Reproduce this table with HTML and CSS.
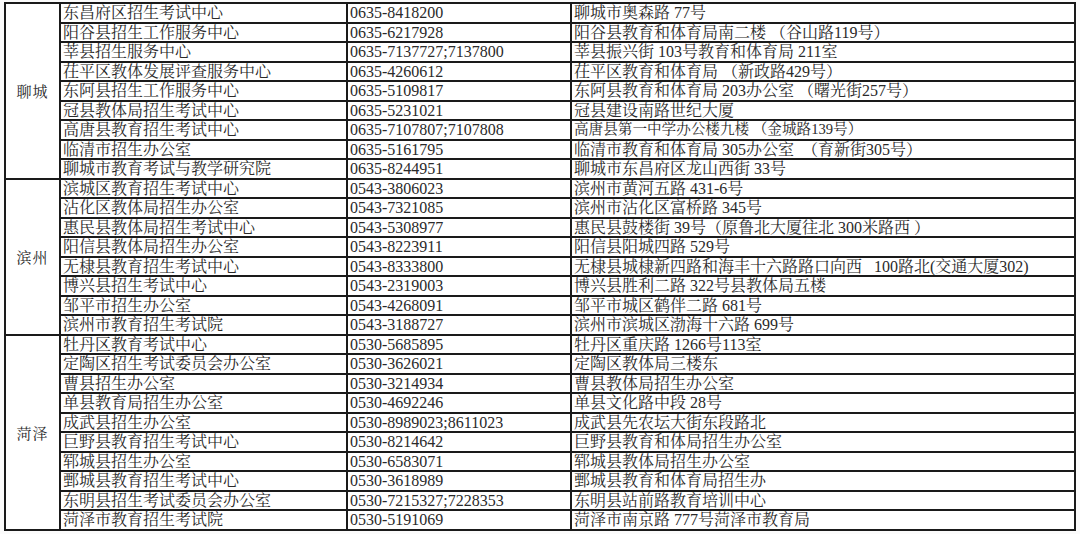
FILE: index.html
```html
<!DOCTYPE html>
<html lang="zh-CN">
<head>
<meta charset="utf-8">
<title>招生考试机构联系方式</title>
<link rel="stylesheet" href="styles.css">
</head>
<body>
<div class="sheet">
  <div class="region r9">聊城</div>
  <div class="cell name">东昌府区招生考试中心</div><div class="cell phone">0635-8418200</div><div class="cell addr">聊城市奥森路 77号</div>
  <div class="cell name">阳谷县招生工作服务中心</div><div class="cell phone">0635-6217928</div><div class="cell addr">阳谷县教育和体育局南二楼 （谷山路119号）</div>
  <div class="cell name">莘县招生服务中心</div><div class="cell phone">0635-7137727;7137800</div><div class="cell addr">莘县振兴街 103号教育和体育局 211室</div>
  <div class="cell name">茌平区教体发展评查服务中心</div><div class="cell phone">0635-4260612</div><div class="cell addr">茌平区教育和体育局 （新政路429号）</div>
  <div class="cell name">东阿县招生工作服务中心</div><div class="cell phone">0635-5109817</div><div class="cell addr">东阿县教育和体育局 203办公室 （曙光街257号）</div>
  <div class="cell name">冠县教体局招生考试中心</div><div class="cell phone">0635-5231021</div><div class="cell addr">冠县建设南路世纪大厦</div>
  <div class="cell name">高唐县教育招生考试中心</div><div class="cell phone">0635-7107807;7107808</div><div class="cell addr small">高唐县第一中学办公楼九楼 （金城路139号）</div>
  <div class="cell name">临清市招生办公室</div><div class="cell phone">0635-5161795</div><div class="cell addr">临清市教育和体育局 305办公室&nbsp; （育新街305号）</div>
  <div class="cell name">聊城市教育考试与教学研究院</div><div class="cell phone">0635-8244951</div><div class="cell addr">聊城市东昌府区龙山西街 33号</div>

  <div class="region r8">滨州</div>
  <div class="cell name">滨城区教育招生考试中心</div><div class="cell phone">0543-3806023</div><div class="cell addr">滨州市黄河五路 431-6号</div>
  <div class="cell name">沾化区教体局招生办公室</div><div class="cell phone">0543-7321085</div><div class="cell addr">滨州市沾化区富桥路 345号</div>
  <div class="cell name">惠民县教体局招生考试中心</div><div class="cell phone">0543-5308977</div><div class="cell addr">惠民县鼓楼街 39号（原鲁北大厦往北 300米路西 ）</div>
  <div class="cell name">阳信县教体局招生办公室</div><div class="cell phone">0543-8223911</div><div class="cell addr">阳信县阳城四路 529号</div>
  <div class="cell name">无棣县教育招生考试中心</div><div class="cell phone">0543-8333800</div><div class="cell addr">无棣县城棣新四路和海丰十六路路口向西&nbsp;&nbsp; 100路北(交通大厦302)</div>
  <div class="cell name">博兴县招生考试中心</div><div class="cell phone">0543-2319003</div><div class="cell addr">博兴县胜利二路 322号县教体局五楼</div>
  <div class="cell name">邹平市招生办公室</div><div class="cell phone">0543-4268091</div><div class="cell addr">邹平市城区鹤伴二路 681号</div>
  <div class="cell name">滨州市教育招生考试院</div><div class="cell phone">0543-3188727</div><div class="cell addr">滨州市滨城区渤海十六路 699号</div>

  <div class="region r10">菏泽</div>
  <div class="cell name">牡丹区教育考试中心</div><div class="cell phone">0530-5685895</div><div class="cell addr">牡丹区重庆路 1266号113室</div>
  <div class="cell name">定陶区招生考试委员会办公室</div><div class="cell phone">0530-3626021</div><div class="cell addr">定陶区教体局三楼东</div>
  <div class="cell name">曹县招生办公室</div><div class="cell phone">0530-3214934</div><div class="cell addr">曹县教体局招生办公室</div>
  <div class="cell name">单县教育局招生办公室</div><div class="cell phone">0530-4692246</div><div class="cell addr">单县文化路中段 28号</div>
  <div class="cell name">成武县招生办公室</div><div class="cell phone">0530-8989023;8611023</div><div class="cell addr">成武县先农坛大街东段路北</div>
  <div class="cell name">巨野县教育招生考试中心</div><div class="cell phone">0530-8214642</div><div class="cell addr">巨野县教育和体局招生办公室</div>
  <div class="cell name">郓城县招生办公室</div><div class="cell phone">0530-6583071</div><div class="cell addr">郓城县教体局招生办公室</div>
  <div class="cell name">鄄城县教育招生考试中心</div><div class="cell phone">0530-3618989</div><div class="cell addr">鄄城县教育和体育局招生办</div>
  <div class="cell name">东明县招生考试委员会办公室</div><div class="cell phone">0530-7215327;7228353</div><div class="cell addr">东明县站前路教育培训中心</div>
  <div class="cell name">菏泽市教育招生考试院</div><div class="cell phone">0530-5191069</div><div class="cell addr">菏泽市南京路 777号菏泽市教育局</div>
</div>
</body>
</html>
```

FILE: styles.css
```css
html, body {
  margin: 0;
  padding: 0;
  background: #fbfbfb;
}

body {
  font-family: "Liberation Serif", "Noto Serif CJK SC", "Noto Sans CJK SC", serif;
  color: #2a2a2a;
}

.sheet {
  display: grid;
  grid-template-columns: 53px 285px 222px 502px;
  grid-auto-rows: 17.5px;
  gap: 2px;
  width: max-content;
  margin: 2px 0 0 4px;
  border: 2px solid #1a1a1a;
  background: #1a1a1a;
}

.cell {
  background: #ffffff;
  padding-left: 2px;
  font-size: 16px;
  line-height: 17.5px;
  white-space: nowrap;
  overflow: hidden;
}

.cell.small {
  font-size: 14.6px;
}

.name { grid-column: 2; }
.phone { grid-column: 3; }
.addr { grid-column: 4; }

.region {
  grid-column: 1;
  background: #ffffff;
  display: flex;
  align-items: center;
  justify-content: center;
  font-size: 15px;
  letter-spacing: 1px;
}

.r8 { grid-row: span 8; }
.r9 { grid-row: span 9; }
.r10 { grid-row: span 10; }
```
